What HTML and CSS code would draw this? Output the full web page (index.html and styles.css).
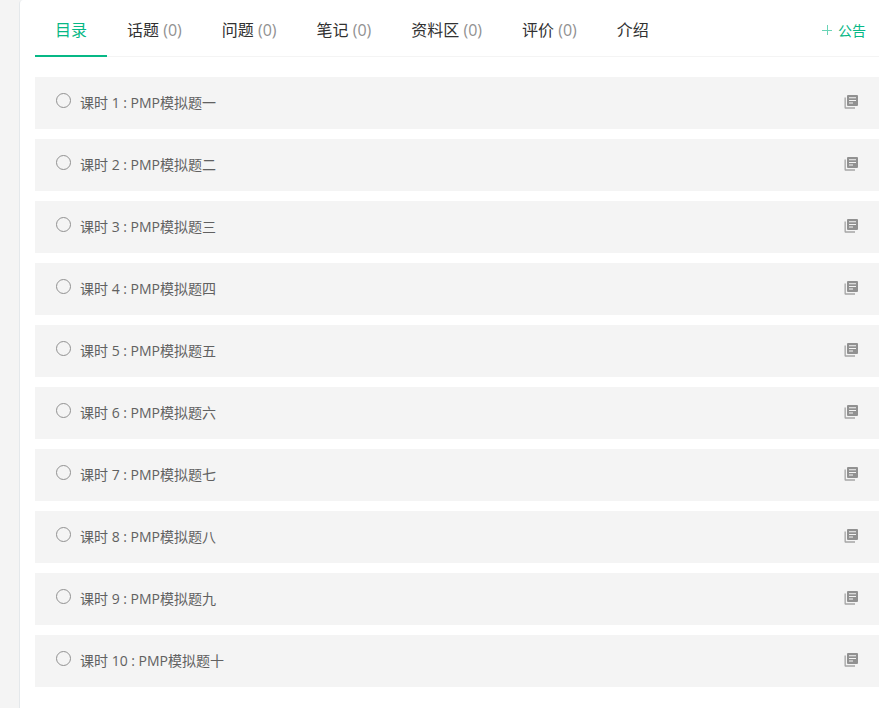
FILE: index.html
```html
<!DOCTYPE html>
<html lang="zh-CN">
<head>
    <meta charset="UTF-8">
    <title>PMP模拟题</title>
    <link rel="stylesheet" href="styles.css">
</head>
<body>
    <!-- lesson icon shared by all rows -->
    <svg class="sprite" aria-hidden="true">
        <symbol id="icon-lesson" viewBox="0 0 14 14">
            <path fill="currentColor" fill-rule="evenodd" d="M4 0h9q1 0 1 1v9q0 1-1 1h-9q-1 0-1-1v-9q0-1 1-1zM5 2.200v1h7v-1zM5 5v1h7v-1zM5 7.600v1h4v-1z"/>
            <path fill="currentColor" fill-opacity="0.8" d="M0.500 2.500h1.300v9.700h9.200v1.500h-9.500q-1 0-1-1z"/>
        </symbol>
    </svg>

    <div class="main">
        <div class="tabs">
            <nav class="tab-list">
                <a class="tab active" href="#">目录</a>
                <a class="tab" href="#">话题 <span class="count">(0)</span></a>
                <a class="tab" href="#">问题 <span class="count">(0)</span></a>
                <a class="tab" href="#">笔记 <span class="count">(0)</span></a>
                <a class="tab" href="#">资料区 <span class="count">(0)</span></a>
                <a class="tab" href="#">评价 <span class="count">(0)</span></a>
                <a class="tab" href="#">介绍</a>
            </nav>
            <button type="button" class="notice-btn">
                <svg class="plus" viewBox="0 0 10 10" aria-hidden="true"><path d="M0 5.500h10M5.500 0v10" stroke="currentColor"/></svg>
                公告
            </button>
        </div>

        <ul class="lessons">
            <li><a class="lesson" href="#"><span class="circle"></span><span class="title">课时 1 : PMP模拟题一</span><svg class="icon"><use href="#icon-lesson"/></svg></a></li>
            <li><a class="lesson" href="#"><span class="circle"></span><span class="title">课时 2 : PMP模拟题二</span><svg class="icon"><use href="#icon-lesson"/></svg></a></li>
            <li><a class="lesson" href="#"><span class="circle"></span><span class="title">课时 3 : PMP模拟题三</span><svg class="icon"><use href="#icon-lesson"/></svg></a></li>
            <li><a class="lesson" href="#"><span class="circle"></span><span class="title">课时 4 : PMP模拟题四</span><svg class="icon"><use href="#icon-lesson"/></svg></a></li>
            <li><a class="lesson" href="#"><span class="circle"></span><span class="title">课时 5 : PMP模拟题五</span><svg class="icon"><use href="#icon-lesson"/></svg></a></li>
            <li><a class="lesson" href="#"><span class="circle"></span><span class="title">课时 6 : PMP模拟题六</span><svg class="icon"><use href="#icon-lesson"/></svg></a></li>
            <li><a class="lesson" href="#"><span class="circle"></span><span class="title">课时 7 : PMP模拟题七</span><svg class="icon"><use href="#icon-lesson"/></svg></a></li>
            <li><a class="lesson" href="#"><span class="circle"></span><span class="title">课时 8 : PMP模拟题八</span><svg class="icon"><use href="#icon-lesson"/></svg></a></li>
            <li><a class="lesson" href="#"><span class="circle"></span><span class="title">课时 9 : PMP模拟题九</span><svg class="icon"><use href="#icon-lesson"/></svg></a></li>
            <li><a class="lesson" href="#"><span class="circle"></span><span class="title">课时 10 : PMP模拟题十</span><svg class="icon"><use href="#icon-lesson"/></svg></a></li>
        </ul>
    </div>
</body>
</html>
```

FILE: styles.css
```css
* {
    margin: 0;
    padding: 0;
    box-sizing: border-box;
}

body {
    font-family: "Open Sans", "Noto Sans CJK SC", sans-serif;
    font-size: 14px;
    color: #616161;
    background-color: #f4f4f4;
}

a {
    color: inherit;
    text-decoration: none;
}

.sprite {
    display: none;
}

.main {
    min-height: 100vh;
    margin-left: 19px;
    padding: 0 11px 20px 15px;
    background-color: #fff;
    border-left: 1px solid #e4e8eb;
    border-top-left-radius: 4px;
}

/* Tabs */
.tabs {
    display: flex;
    justify-content: space-between;
    height: 57px;
    border-bottom: 1px solid #f4f4f4;
}

.tab-list {
    display: flex;
}

.tab {
    height: 57px;
    padding: 4px 20px 0;
    line-height: 52px;
    font-size: 16px;
    color: #313131;
    white-space: nowrap;
}

.tab.active {
    color: #07b886;
    border-bottom: 2px solid #07b886;
}

.count {
    color: #919191;
}

.notice-btn {
    display: flex;
    align-items: center;
    gap: 6px;
    padding: 4px 13px 0 0;
    font: inherit;
    color: #07b886;
    background: none;
    border: none;
    cursor: pointer;
}

.plus {
    width: 10px;
    height: 10px;
    opacity: 0.6;
}

/* Lesson list */
.lessons {
    display: flex;
    flex-direction: column;
    gap: 10px;
    margin-top: 20px;
    list-style: none;
}

.lesson {
    display: flex;
    align-items: center;
    height: 52px;
    padding: 0 21px 2px;
    background-color: #f4f4f4;
}

.lesson:hover {
    color: #07b886;
}

.circle {
    width: 15px;
    height: 15px;
    margin: 0 9px 3px 0;
    border: 1px solid #919191;
    border-radius: 50%;
}

.title {
    flex: 1;
}

.icon {
    width: 14px;
    height: 14px;
    color: #919191;
}
```
